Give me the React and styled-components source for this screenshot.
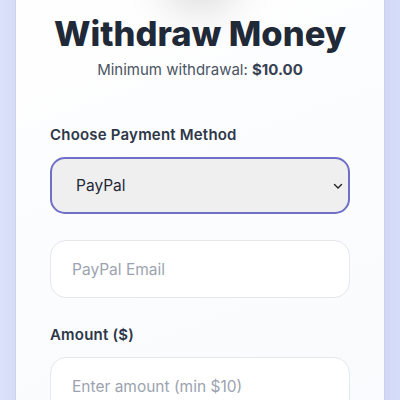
import React from "react";
import styled, { createGlobalStyle } from "styled-components";

const GlobalStyle = createGlobalStyle`
  body {
    margin: 0;
    background: linear-gradient(90deg, #dfe4fc 0%, #d9dffb 100%);
    font-family: "Inter", "Noto Sans", sans-serif;
    overflow: hidden;
  }
`;

const Page = styled.div`
  padding: 0 16px;
  margin-top: -100px;
`;

const Card = styled.div`
  background: linear-gradient(160deg, #ffffff 0%, #f9fafd 100%);
  border-radius: 24px;
  box-shadow: 0 0 0 1px rgba(200, 205, 235, 0.6), 0 10px 30px rgba(80, 90, 160, 0.12);
  padding: 20px 34px 40px;
  display: flex;
  flex-direction: column;
`;

const IconBubble = styled.div`
  width: 76px;
  height: 76px;
  border-radius: 50%;
  align-self: center;
  background: #f6f6f7;
  box-shadow: 0 18px 40px rgba(0, 0, 0, 0.13);
  margin-bottom: 18px;
`;

const Title = styled.h1`
  margin: 0;
  text-align: center;
  font-size: 34.5px;
  font-weight: 800;
  color: #1f2937;
  letter-spacing: 0;
  line-height: 40px;
`;

const Subtitle = styled.p`
  margin: 6px 0 0;
  text-align: center;
  font-size: 15px;
  color: #4b5563;
  line-height: 20px;

  strong {
    color: #374151;
    font-weight: 700;
  }
`;

const Field = styled.div`
  display: flex;
  flex-direction: column;
  margin-top: ${(p) => p.$top}px;
`;

const Label = styled.label`
  font-size: 15px;
  font-weight: 600;
  color: #2d3748;
  letter-spacing: 0.2px;
  line-height: 20px;
  margin-bottom: 12px;
`;

const Select = styled.select`
  appearance: none;
  height: 57px;
  box-sizing: border-box;
  border: 2px solid #6f6fc9;
  border-radius: 15px;
  background: #efefef;
  font-family: inherit;
  font-size: 15.5px;
  color: #1f2937;
  padding: 0 24px;
  outline: none;
`;

const SelectWrap = styled.div`
  position: relative;
  display: flex;
  flex-direction: column;
`;

const Chevron = styled.svg`
  position: absolute;
  right: 6px;
  top: 50%;
  transform: translateY(-50%);
  pointer-events: none;
`;

const Input = styled.input`
  height: 58px;
  box-sizing: border-box;
  border: 1.5px solid #e5e7eb;
  border-radius: 16px;
  background: #ffffff;
  font-family: inherit;
  font-size: 15.5px;
  color: #1f2937;
  padding: 0 21px;
  outline: none;

  &::placeholder {
    color: #9ca3af;
  }
`;

export default function App() {
  return (
    <>
      <GlobalStyle />
      <Page>
        <Card>
          <IconBubble />
          <Title>Withdraw Money</Title>
          <Subtitle>
            Minimum withdrawal: <strong>$10.00</strong>
          </Subtitle>
          <Field $top={45}>
            <Label>Choose Payment Method</Label>
            <SelectWrap>
              <Select defaultValue="paypal">
                <option value="paypal">PayPal</option>
                <option value="bank">Bank Transfer</option>
              </Select>
              <Chevron width="12" height="12" viewBox="0 0 12 12">
                <path d="M2.5 4.5 L6 8 L9.5 4.5" fill="none" stroke="#222" strokeWidth="1.4" strokeLinecap="round" strokeLinejoin="round" />
              </Chevron>
            </SelectWrap>
          </Field>
          <Field $top={26}>
            <Input placeholder="PayPal Email" />
          </Field>
          <Field $top={27}>
            <Label>Amount ($)</Label>
            <Input placeholder="Enter amount (min $10)" />
          </Field>
        </Card>
      </Page>
    </>
  );
}
